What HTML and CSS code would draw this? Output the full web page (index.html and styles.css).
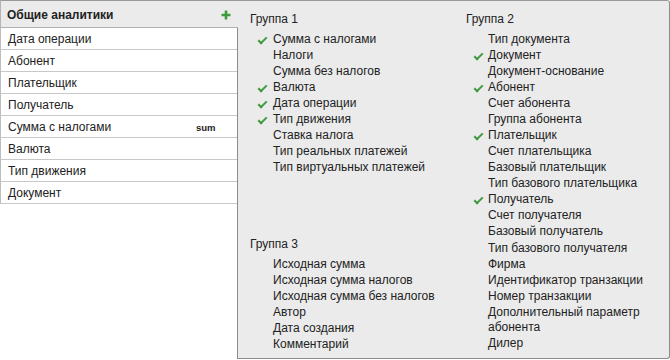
FILE: index.html
```html
<!DOCTYPE html>
<html lang="ru">
<head>
  <meta charset="UTF-8">
  <title>Общие аналитики</title>
  <link rel="stylesheet" href="styles.css">
</head>
<body>
  <div class="wrap">
    <div class="left">
      <div class="head">
        <span>Общие аналитики</span>
        <svg class="plus" width="10" height="10" viewBox="0 0 10 10"><path d="M5 0.5v9M0.5 5h9" stroke="#3d9b3d" stroke-width="2.6"/></svg>
      </div>
      <div class="list-wrap">
        <div class="row">Дата операции</div>
        <div class="row">Абонент</div>
        <div class="row">Плательщик</div>
        <div class="row">Получатель</div>
        <div class="row"><span>Сумма с налогами</span><span class="tag">sum</span></div>
        <div class="row">Валюта</div>
        <div class="row">Тип движения</div>
        <div class="row">Документ</div>
      </div>
    </div>

    <div class="right">
      <div class="col">
        <div class="group">
          <div class="gtitle">Группа 1</div>
          <div class="item on">Сумма с налогами</div>
          <div class="item">Налоги</div>
          <div class="item">Сумма без налогов</div>
          <div class="item on">Валюта</div>
          <div class="item on">Дата операции</div>
          <div class="item on">Тип движения</div>
          <div class="item">Ставка налога</div>
          <div class="item">Тип реальных платежей</div>
          <div class="item">Тип виртуальных платежей</div>
        </div>
        <div class="group g3">
          <div class="gtitle">Группа 3</div>
          <div class="item">Исходная сумма</div>
          <div class="item">Исходная сумма налогов</div>
          <div class="item">Исходная сумма без налогов</div>
          <div class="item">Автор</div>
          <div class="item">Дата создания</div>
          <div class="item">Комментарий</div>
        </div>
      </div>
      <div class="col">
        <div class="group">
          <div class="gtitle">Группа 2</div>
          <div class="item">Тип документа</div>
          <div class="item on">Документ</div>
          <div class="item">Документ-основание</div>
          <div class="item on">Абонент</div>
          <div class="item">Счет абонента</div>
          <div class="item">Группа абонента</div>
          <div class="item on">Плательщик</div>
          <div class="item">Счет плательщика</div>
          <div class="item">Базовый плательщик</div>
          <div class="item">Тип базового плательщика</div>
          <div class="item on">Получатель</div>
          <div class="item">Счет получателя</div>
          <div class="item gap">Базовый получатель</div>
          <div class="item">Тип базового получателя</div>
          <div class="item">Фирма</div>
          <div class="item">Идентификатор транзакции</div>
          <div class="item">Номер транзакции</div>
          <div class="item">Дополнительный параметр абонента</div>
          <div class="item">Дилер</div>
        </div>
      </div>
    </div>
  </div>
</body>
</html>
```

FILE: styles.css
```css
body { margin: 0; background: #fff; font-family: "Liberation Sans", Arial, sans-serif; font-size: 12px; color: #222; }
.wrap { display: flex; width: 670px; height: 359px; }

.left { width: 238px; display: flex; flex-direction: column; }
.head { height: 26px; display: flex; align-items: center; justify-content: space-between; padding: 1px 7px 0 7px; box-sizing: border-box; height: 28px; background: #ebebeb; border-top: 1px solid #9a9a9a; border-left: 1px solid #b5b5b5; border-bottom: 1px solid #b0b0b0; font-weight: bold; color: #222; }
.head span { margin-left: -1px; }
.list-wrap { flex: 1; border-right: 1px solid #8c8c8c; }
.row { height: 21px; line-height: 21px; padding: 1px 0 0 7px; box-sizing: border-box; height: 22px; border-left: 1px solid #bdbdbd; border-bottom: 1px solid #c8c8c8; display: flex; }
.row span:first-child { flex: 1; }
.tag { width: 41px; font-size: 9.5px; font-weight: bold; color: #222; }

.right { flex: 1; display: grid; grid-template-columns: 216px 1fr; padding: 10px 0 0 12px; background: #ebebeb; border-top: 1px solid #9a9a9a; border-right: 1px solid #8c8c8c; border-bottom: 1px solid #8c8c8c; border-radius: 0 3px 3px 0; }
.gtitle { line-height: 16px; margin-bottom: 5px; color: #222; }
.item { position: relative; line-height: 15px; margin-bottom: 1px; padding-left: 23px; color: #222; }
.item.gap { margin-bottom: 2px; }
.col:last-child .item { padding-left: 22px; }
.item.on::before { content: ""; position: absolute; left: 8px; top: 5px; width: 7px; height: 3px; border-left: 2.5px solid #3d9b3d; border-bottom: 2.5px solid #3d9b3d; transform: rotate(-45deg); }
.g3 { margin-top: 61px; }
```
